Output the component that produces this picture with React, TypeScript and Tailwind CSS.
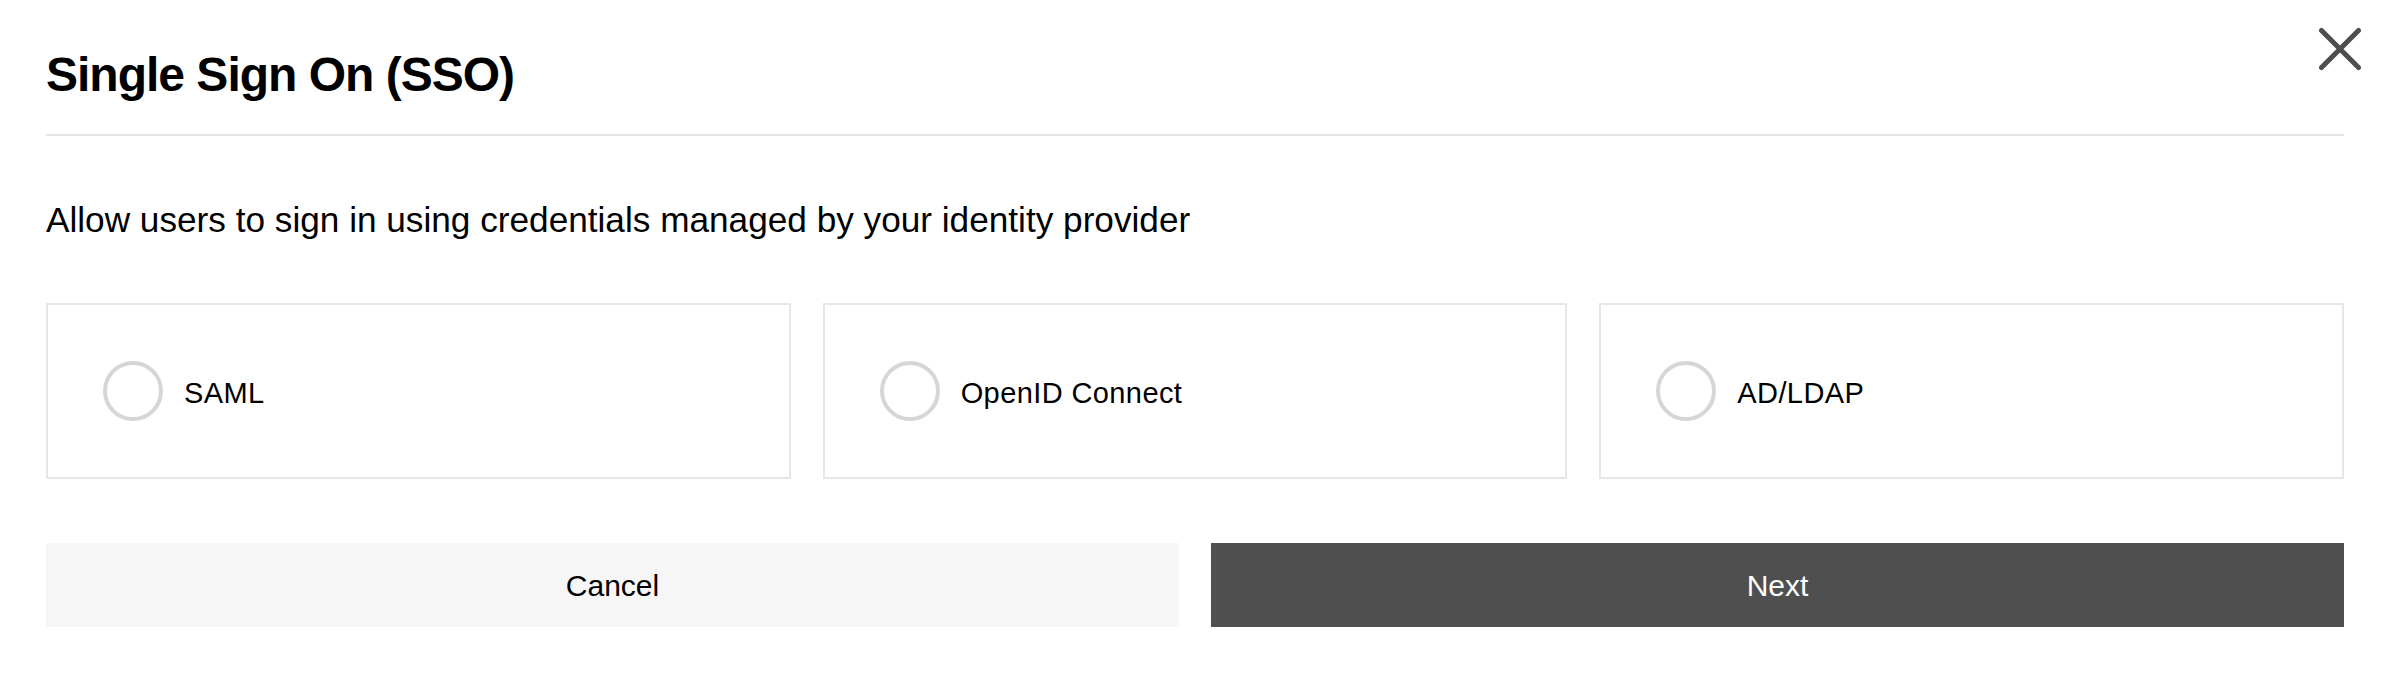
import React from "react";

const options = ["SAML", "OpenID Connect", "AD/LDAP"];

export default function App() {
  return (
    <div
      className="relative w-[2390px] h-[674px] bg-white px-[46px] text-black"
      style={{ fontFamily: '"Liberation Sans", Arial, Helvetica, sans-serif' }}
    >
      <button
        aria-label="Close"
        className="absolute right-[28px] top-[27px] w-[44px] h-[44px] flex items-center justify-center"
      >
        <svg width="44" height="44" viewBox="0 0 44 44" fill="none">
          <path
            d="M3.5 3.5 L40.5 40.5 M40.5 3.5 L3.5 40.5"
            stroke="#4d4d4d"
            strokeWidth="5"
            strokeLinecap="round"
          />
        </svg>
      </button>

      <div className="pt-[51px]">
        <h1 className="text-[48px] leading-[48px] font-bold tracking-[-1px]">
          Single Sign On (SSO)
        </h1>
      </div>

      <div className="mt-[35px] h-[2px] bg-[#e5e5e5]" />

      <p className="mt-[66px] text-[35.2px] leading-[36px]">
        Allow users to sign in using credentials managed by your identity provider
      </p>

      <div className="mt-[65px] grid grid-cols-3 gap-[32px]">
        {options.map((o) => (
          <label
            key={o}
            className="h-[176px] border-2 border-[#e6e6e6] flex items-center pl-[55px] cursor-pointer"
          >
            <span className="w-[60px] h-[60px] rounded-full border-4 border-[#d6d6d6] shrink-0" />
            <span className="ml-[21px] pt-[4px] text-[29px] leading-[30px] tracking-[0.4px]">{o}</span>
          </label>
        ))}
      </div>

      <div className="mt-[64px] grid grid-cols-2 gap-[32px]">
        <button className="h-[84px] bg-[#f6f6f6] text-[30px] text-black">Cancel</button>
        <button className="h-[84px] bg-[#4f4f4f] text-[30px] text-white">Next</button>
      </div>
    </div>
  );
}
